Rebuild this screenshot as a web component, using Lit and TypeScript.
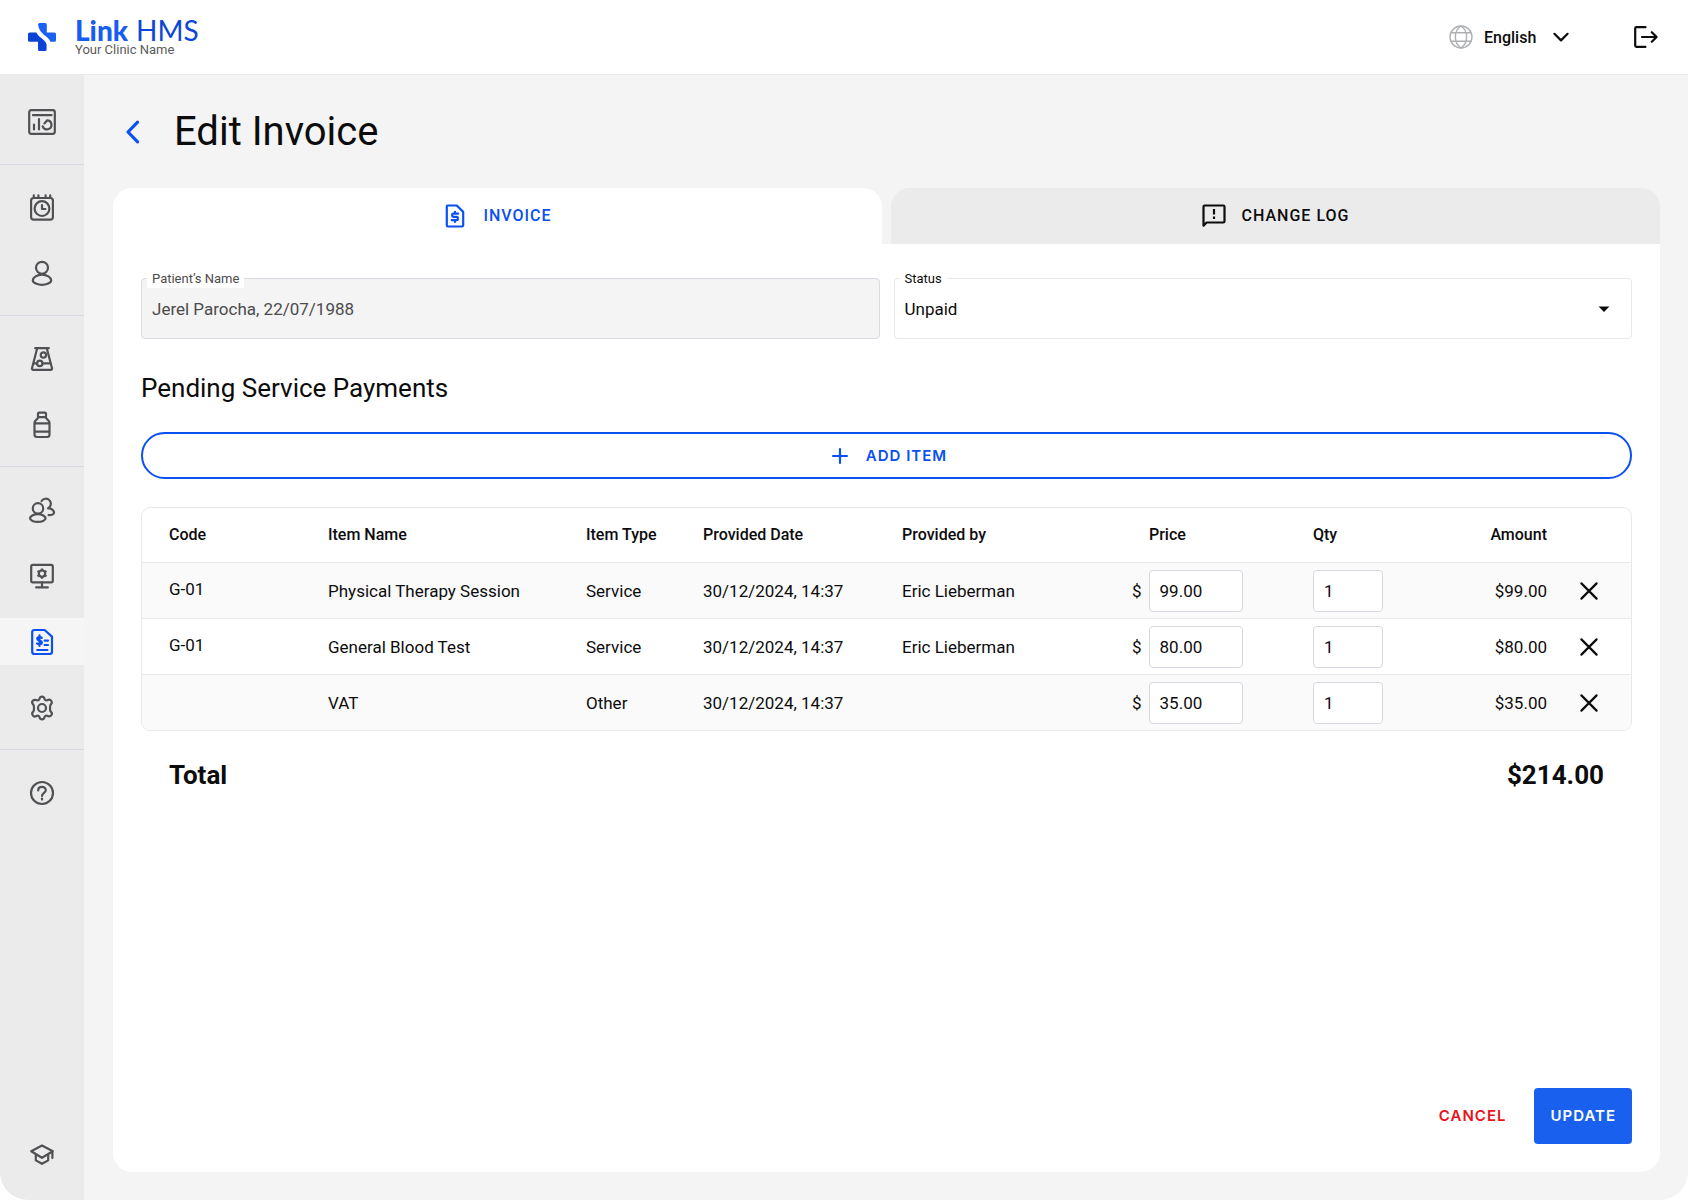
import { LitElement, html, css, svg, nothing } from "lit";
import { customElement, property, state } from "lit/decorators.js";
import { classMap } from "lit/directives/class-map.js";

const icons: Record<string, unknown> = {
  dashboard: svg`
    <rect x="1.2" y="2.2" width="25.6" height="23.6" rx="2"/>
    <path d="M5 7.2H23.5M6 16.5V21.5M11 11V21.5M19 12.4A4.5 4.5 0 1 1 14.7 18.4M16.4 15.4L19 12.6"/>`,
  appointments: svg`
    <rect x="3.1" y="4" width="21.8" height="21.6" rx="2.6"/>
    <path d="M5.8 1.4V4M10.4 1.4V4M17.6 1.4V4M22.2 1.4V4M14 11.2V15H17.4"/>
    <circle cx="14" cy="14.6" r="7.4"/>`,
  patient: svg`
    <circle cx="14" cy="7.8" r="6"/>
    <path d="M14 14.6c-4.8 0-9.2 3-9.2 5.8 0 2.2 5 4.4 9.2 4.4s9.2-2.2 9.2-4.4c0-2.8-4.4-5.8-9.2-5.8z"/>`,
  lab: svg`
    <path d="M7.2 3.2H20.8M9.2 3.2L4 23.2Q3.7 24.8 5.2 24.8H22.8Q24.3 24.8 24 23.2L18.8 3.2M6 18.4H9M14.6 18.4H22.6"/>
    <circle cx="15.4" cy="10" r="2.7"/><circle cx="11.8" cy="18.4" r="2.7"/>`,
  pharmacy: svg`
    <rect x="10" y="1.6" width="8" height="4.6" rx="1"/>
    <path d="M10.2 6.2C10 8.6 6.5 8.8 6.5 12V23.6Q6.5 26 8.9 26H19.1Q21.5 26 21.5 23.6V12C21.5 8.8 18 8.6 17.8 6.2M6.5 12.4H21.5M6.5 20.6H21.5"/>`,
  staff: svg`
    <circle cx="10" cy="12.4" r="5.2"/>
    <path d="M9.8 18.2c-4.2 0-7.8 2-7.8 4.1s4 3.6 7.8 3.6 7.8-1.5 7.8-3.6-3.6-4.1-7.8-4.1z"/>
    <path d="M13.6 5A5 5 0 1 1 20 12.2C23.6 12.8 26 14.6 26 16.6 26 18.2 23.8 19.2 20.6 19.2"/>`,
  workstation: svg`
    <rect x="3.2" y="2.8" width="21.6" height="17.6" rx="1.6"/>
    <path d="M14 20.4V25M8.2 25.4H19.8"/>
    <circle cx="14" cy="11.6" r="3.2"/>
    <path stroke-linecap="butt" d="M14 8.6V6.4M14 14.6V16.8M11.4 10.1L9.5 9M16.6 13.1L18.5 14.2M16.6 10.1L18.5 9M11.4 13.1L9.5 14.2"/>`,
  invoices: svg`
    <path d="M6.4 2H16.6L24 8.6V23.8Q24 26 21.8 26H6.4Q4.2 26 4.2 23.8V4.2Q4.2 2 6.4 2Z"/>
    <path d="M9.2 22H19.4M16.6 12.6H20M16.6 17H20M13.8 9.8C13 8.6 9.2 8.6 9.2 10.8C9.2 13.2 13.8 12 13.8 14.6C13.8 16.8 10 16.8 9 15.4M11.5 7.4V18"/>`,
  settings: svg`
    <path d="M11.5 4.8Q12 2.6 14 2.6T16.5 4.8Q17 6.8 19 6.2Q22 4.6 23.2 6.8T23.4 9.6Q21.6 11.4 22 14Q21.6 16.6 23.4 18.4Q24.6 19.6 23.2 21.4T19 21.8Q17 21.2 16.5 23.2Q16 25.4 14 25.4T11.5 23.2Q11 21.2 9 21.8Q6 23.4 4.8 21.4T4.6 18.4Q6.4 16.6 6 14Q6.4 11.4 4.6 9.6Q3.4 8.4 4.8 6.8T9 6.2Q11 6.8 11.5 4.8Z"/>
    <circle cx="14" cy="14" r="4"/>`,
  help: svg`
    <circle cx="14" cy="14" r="11"/>
    <path d="M10.2 11.4C10.2 6.8 17.8 6.8 17.8 11.2C17.8 14 14 13.8 14 17"/>
    <path d="M14 19.6V20.6"/>`,
  learn: svg`
    <path d="M14 4.6L24.8 10.2L14 16.8L3.2 10.2ZM7.8 13.4V19.4L14 22.8L20.2 19.4V13.4M24.4 10.8V17"/>`,
  globe: svg`
    <circle cx="14" cy="14" r="11"/>
    <path d="M4 9.8H24M4 18.2H24M14 3C6.500 8 6.500 20 14 25M14 3C21.500 8 21.500 20 14 25"/>`,
  chevron: svg`<path d="M7.4 10.8L14 17.4L20.6 10.8"/>`,
  caret: svg`<path d="M8.6 11.4H19.4L14 17Z" fill="currentColor" stroke="none"/>`,
  logout: svg`<path d="M14.5 4.2H5.4Q4.2 4.2 4.2 5.4V22.6Q4.2 23.8 5.4 23.8H14.5M11 14H25.5M20.8 9.2L25.6 14L20.8 18.8"/>`,
  back: svg`<path d="M18.6 4.2L9 14L18.6 23.8"/>`,
  bill: svg`
    <path d="M6.4 3.5H15.8L22.2 9.9V23.3Q22.2 24.5 21 24.5H7Q5.8 24.5 5.8 23.3V4.7Q5.8 3.5 6.4 3.5Z"/>
    <path d="M17.2 11.6H12.2Q11.2 11.6 11.2 12.6V13.8Q11.2 14.8 12.2 14.8H15.8Q16.8 14.8 16.8 15.8V17.2Q16.8 18.2 15.8 18.2H10.8M14 9.8V11.6M14 18.2V20"/>`,
  log: svg`
    <path d="M3.5 23.6V4.7Q3.5 3.5 4.7 3.5H23.3Q24.5 3.5 24.5 4.7V19.3Q24.5 20.5 23.3 20.5H6.6Z"/>
    <path d="M14 7V12.4M14 14.6V17" stroke-linecap="butt"/>`,
  plus: svg`<path d="M14 7V21M7 14H21"/>`,
  close: svg`<path d="M6.4 6.4L21.6 21.6M21.6 6.4L6.4 21.6"/>`,
};

@customElement("hms-icon")
class HmsIcon extends LitElement {
  @property() name = "";

  static styles = css`
    :host { display: inline-flex; flex: none; width: 28px; height: 28px; }
    .glyph {
      width: 28px;
      height: 28px;
      fill: none;
      stroke: currentColor;
      stroke-width: 2.2;
      stroke-linecap: round;
      stroke-linejoin: round;
    }
    .fine { stroke-width: 1.4; }
    .bold { stroke-width: 3.2; }
  `;

  render() {
    const cls = classMap({ glyph: true, fine: this.name === "globe", bold: this.name === "back" });
    return html`<svg class=${cls} viewBox="0 0 28 28" aria-hidden="true">${icons[this.name]}</svg>`;
  }
}

@customElement("hms-header")
class HmsHeader extends LitElement {
  static styles = css`
    :host {
      display: flex;
      align-items: center;
      justify-content: space-between;
      box-sizing: border-box;
      height: 75px;
      padding: 0 29px 0 28px;
      background: #fff;
      border-bottom: 1px solid #e9e9e9;
    }
    .brand { display: flex; align-items: center; gap: 19px; color: inherit; text-decoration: none; }
    .mark { width: 28px; height: 28px; }
    .names { display: flex; flex-direction: column; padding-bottom: 2px; }
    .product {
      display: flex;
      gap: 8px;
      font: 400 28px/26px Lato, sans-serif;
      color: #0b46d8;
    }
    .product b { font-weight: 900; color: #175df2; }
    .clinic { font-size: 13px; line-height: 13px; color: #5c5c5c; }
    .tools { display: flex; align-items: center; gap: 56px; }
    .language { display: flex; align-items: center; gap: 9px; }
    .globe { color: #aeb0b4; }
    .pick { display: grid; grid-template-columns: 1fr 28px; align-items: center; }
    .choice {
      grid-area: 1 / 1 / 2 / 3;
      appearance: none;
      border: 0;
      margin: 0;
      padding: 2px 38px 0 0;
      background: transparent;
      color: #0c0c0d;
      font: 500 16px/28px Roboto, sans-serif;
    }
    .arrow { grid-area: 1 / 2 / 2 / 3; pointer-events: none; }
    .exit { display: flex; padding: 0; border: 0; background: none; color: #0c0c0d; }
  `;

  render() {
    return html`
      <a class="brand" href="#">
        <svg class="mark" viewBox="0 0 28 28" aria-hidden="true">
          <path fill="#1a62f5" d="M10 1.6Q10 0 11.6 0H17.2Q18.8 0 18.8 1.6V9.5H26.4Q28 9.5 28 11.1V17.2Q28 18.8 26.4 18.8H22.4C20 12.5 11.5 12 10 1.6Z"/>
          <path fill="#0b43d6" d="M1.6 9.5H8.4C11 15.5 17 15.5 18.6 21.5V26.4Q18.6 28 17 28H11.6Q10 28 10 26.4V18.8H1.6Q0 18.8 0 17.2V11.1Q0 9.5 1.6 9.5Z"/>
        </svg>
        <span class="names">
          <span class="product"><b>Link</b><span>HMS</span></span>
          <span class="clinic">Your Clinic Name</span>
        </span>
      </a>
      <div class="tools">
        <div class="language">
          <hms-icon class="globe" name="globe"></hms-icon>
          <span class="pick">
            <select class="choice" aria-label="Language"><option>English</option></select>
            <hms-icon class="arrow" name="chevron"></hms-icon>
          </span>
        </div>
        <button class="exit" aria-label="Log out"><hms-icon name="logout"></hms-icon></button>
      </div>
    `;
  }
}

@customElement("hms-sidebar")
class HmsSidebar extends LitElement {
  static styles = css`
    :host { display: block; background: #ebebeb; }
    .nav { display: flex; flex-direction: column; height: 100%; }
    .group {
      display: flex;
      flex-direction: column;
      gap: 19px;
      padding: 19px 0 18px;
      border-bottom: 1px solid #d5d9e4;
    }
    .group:first-child { padding: 23px 0 19px; }
    .group.open { border-bottom: 0; }
    .group.foot { border-bottom: 0; margin-top: auto; padding-bottom: 22px; }
    .item { display: flex; align-items: center; justify-content: center; height: 47px; color: #505154; }
    .item.active { background: #f5f5f5; color: #0b50f0; }
  `;

  private groups = [
    { cls: "", items: [["dashboard", "Dashboard"]] },
    { cls: "", items: [["appointments", "Appointments"], ["patient", "Patients"]] },
    { cls: "", items: [["lab", "Laboratory"], ["pharmacy", "Pharmacy"]] },
    { cls: "", items: [["staff", "Staff"], ["workstation", "Workstations"], ["invoices", "Invoices"], ["settings", "Settings"]] },
    { cls: "open", items: [["help", "Help"]] },
    { cls: "foot", items: [["learn", "Learning"]] },
  ];

  render() {
    return html`<nav class="nav" aria-label="Main">
      ${this.groups.map(
        (g) => html`<div class="group ${g.cls}">
          ${g.items.map(
            ([icon, label]) => html`<a
              class=${classMap({ item: true, active: icon === "invoices" })}
              href="#"
              aria-label=${label}
              ><hms-icon name=${icon}></hms-icon
            ></a>`
          )}
        </div>`
      )}
    </nav>`;
  }
}

interface Item {
  code: string;
  name: string;
  type: string;
  date: string;
  by: string;
  price: number;
  qty: number;
}

@customElement("invoice-items")
class InvoiceItems extends LitElement {
  @property({ attribute: false }) items: Item[] = [];

  static styles = css`
    :host { display: block; }
    .frame { border: 1px solid #e9e9ec; border-radius: 9px; overflow: hidden; }
    .items { width: 100%; table-layout: fixed; border-collapse: collapse; font-size: 17px; line-height: 20px; }
    .items th, .items td { height: 55px; padding: 0; text-align: left; vertical-align: middle; font-weight: 400; }
    .items th { height: 54px; font-size: 16px; font-weight: 500; }
    .items tbody tr { border-top: 1px solid #e9e9ec; }
    .items tbody tr:nth-child(odd) { background: #fafafa; }
    .items .code { padding-left: 27px; }
    .items td.code { padding-bottom: 4px; height: 51px; }
    .items .amount { text-align: right; }
    .items .remove { text-align: center; }
    .items th.price { padding-left: 17px; }
    .w-code { width: 186px; }
    .w-name { width: 258px; }
    .w-type { width: 117px; }
    .w-date { width: 199px; }
    .w-by { width: 230px; }
    .w-price { width: 181px; }
    .w-qty { width: 87px; }
    .w-amount { width: 147px; }
    .w-remove { width: 84px; }
    .money { display: flex; align-items: center; gap: 7px; }
    .box {
      display: block;
      box-sizing: border-box;
      height: 42px;
      margin: 0;
      padding: 0 10px;
      border: 1px solid #d6d7e0;
      border-radius: 4px;
      background: #fff;
      color: #0c0c0d;
      font: 400 17px/20px Roboto, sans-serif;
    }
    .box.cost { width: 94px; }
    .box.count { width: 70px; }
    .drop { display: inline-flex; padding: 4px; border: 0; background: none; color: #0c0c0d; vertical-align: middle; }
  `;

  render() {
    return html`<div class="frame">
      <table class="items">
        <colgroup>
          <col class="w-code" /><col class="w-name" /><col class="w-type" /><col class="w-date" /><col class="w-by" />
          <col class="w-price" /><col class="w-qty" /><col class="w-amount" /><col class="w-remove" />
        </colgroup>
        <thead>
          <tr>
            <th class="code">Code</th>
            <th>Item Name</th>
            <th>Item Type</th>
            <th>Provided Date</th>
            <th>Provided by</th>
            <th class="price">Price</th>
            <th>Qty</th>
            <th class="amount">Amount</th>
            <th aria-label="Remove"></th>
          </tr>
        </thead>
        <tbody>
          ${this.items.map(
            (it) => html`<tr>
              <td class="code">${it.code || nothing}</td>
              <td>${it.name}</td>
              <td>${it.type}</td>
              <td>${it.date}</td>
              <td>${it.by || nothing}</td>
              <td>
                <label class="money">$<input class="box cost" aria-label="Price" .value=${it.price.toFixed(2)} /></label>
              </td>
              <td><input class="box count" aria-label="Quantity" .value=${String(it.qty)} /></td>
              <td class="amount">$${(it.price * it.qty).toFixed(2)}</td>
              <td class="remove">
                <button class="drop" aria-label="Remove item"><hms-icon name="close"></hms-icon></button>
              </td>
            </tr>`
          )}
        </tbody>
      </table>
    </div>`;
  }
}

@customElement("app-root")
class AppRoot extends LitElement {
  @state() private items: Item[] = [
    { code: "G-01", name: "Physical Therapy Session", type: "Service", date: "30/12/2024, 14:37", by: "Eric Lieberman", price: 99, qty: 1 },
    { code: "G-01", name: "General Blood Test", type: "Service", date: "30/12/2024, 14:37", by: "Eric Lieberman", price: 80, qty: 1 },
    { code: "", name: "VAT", type: "Other", date: "30/12/2024, 14:37", by: "", price: 35, qty: 1 },
  ];

  static styles = css`
    :host {
      display: block;
      background: #fff;
      color: #0c0c0d;
      font-family: Roboto, "Noto Sans", sans-serif;
    }
    .window {
      display: grid;
      grid-template: auto 1fr / 84px 1fr;
      min-height: 100vh;
      border-radius: 28px;
      overflow: hidden;
      background: #f4f4f4;
    }
    .top { grid-column: 1 / 3; }
    .main { display: flex; flex-direction: column; padding: 29px 28px 28px 29px; min-width: 0; }
    .heading { display: flex; align-items: center; gap: 27px; padding: 0 6px; height: 56px; }
    .back { display: flex; color: #0b50f0; }
    .title { margin: 0; font-size: 40px; line-height: 56px; font-weight: 400; }
    .tabs { display: flex; gap: 9px; margin-top: 28px; }
    .tab {
      flex: 1 1 0;
      display: flex;
      align-items: center;
      justify-content: center;
      gap: 14px;
      height: 56px;
      padding: 0 2px 0 0;
      border: 0;
      border-radius: 19px 19px 0 0;
      background: #ebebeb;
      color: #0c0c0d;
      font: 500 16px/20px Roboto, sans-serif;
      letter-spacing: 1px;
    }
    .tab.current { background: #fff; color: #0b50f0; }
    .card {
      flex: 1;
      display: flex;
      flex-direction: column;
      padding: 34px 28px 28px;
      border-radius: 0 0 19px 19px;
      background: #fff;
    }
    .fields { display: grid; grid-template-columns: 1fr 1fr; gap: 14px; }
    .field { position: relative; display: grid; grid-template-columns: 1fr 28px; align-items: center; }
    .caption {
      position: absolute;
      top: -8px;
      left: 6px;
      padding: 0 5px;
      background: #fff;
      font-size: 13px;
      line-height: 18px;
    }
    .input {
      grid-area: 1 / 1 / 2 / 3;
      appearance: none;
      box-sizing: border-box;
      width: 100%;
      height: 61px;
      margin: 0;
      padding: 0 10px;
      border: 1px solid #e9e9ee;
      border-radius: 4px;
      background: #fff;
      color: #0c0c0d;
      font: 400 17px/20px Roboto, sans-serif;
    }
    .muted .input { background: #f4f4f4; color: #4b4b4d; border-color: #d9dae2; }
    .muted .caption { color: #4b4b4d; }
    .pointer { grid-area: 1 / 2 / 2 / 3; justify-self: end; margin-right: 14px; pointer-events: none; }
    .section { margin: 33px 0 28px; font-size: 26px; line-height: 32px; font-weight: 400; }
    .add {
      display: flex;
      align-items: center;
      justify-content: center;
      gap: 12px;
      height: 47px;
      border: 2px solid #0b50f0;
      border-radius: 24px;
      background: #fff;
      color: #0b50f0;
      font: 600 15px/20px Inter, sans-serif;
      letter-spacing: 1px;
    }
    .table { margin-top: 28px; }
    .total {
      display: flex;
      justify-content: space-between;
      padding: 28px;
      font-size: 26px;
      line-height: 32px;
      font-weight: 700;
    }
    .actions { display: flex; justify-content: flex-end; margin-top: auto; }
    .action {
      height: 56px;
      padding: 0 28px;
      border: 0;
      border-radius: 4px;
      background: none;
      color: #e8131b;
      font: 600 15px/20px Inter, sans-serif;
      letter-spacing: 1px;
    }
    .action.primary { padding: 0 16px; background: #1a60ee; color: #fff; }
  `;

  render() {
    const total = this.items.reduce((sum, it) => sum + it.price * it.qty, 0);
    return html`<div class="window">
      <hms-header class="top"></hms-header>
      <hms-sidebar></hms-sidebar>
      <main class="main">
        <div class="heading">
          <a class="back" href="#" aria-label="Back"><hms-icon name="back"></hms-icon></a>
          <h1 class="title">Edit Invoice</h1>
        </div>
        <div class="tabs" role="tablist">
          <button class="tab current" role="tab" aria-selected="true"><hms-icon name="bill"></hms-icon>INVOICE</button>
          <button class="tab" role="tab" aria-selected="false"><hms-icon name="log"></hms-icon>CHANGE LOG</button>
        </div>
        <section class="card">
          <div class="fields">
            <div class="field muted">
              <input class="input" id="patient" readonly value="Jerel Parocha, 22/07/1988" />
              <label class="caption" for="patient">Patient’s Name</label>
            </div>
            <div class="field">
              <select class="input" id="status"><option>Unpaid</option></select>
              <hms-icon class="pointer" name="caret"></hms-icon>
              <label class="caption" for="status">Status</label>
            </div>
          </div>
          <h2 class="section">Pending Service Payments</h2>
          <button class="add"><hms-icon name="plus"></hms-icon>ADD ITEM</button>
          <invoice-items class="table" .items=${this.items}></invoice-items>
          <div class="total"><span>Total</span><span>$${total.toFixed(2)}</span></div>
          <div class="actions">
            <button class="action">CANCEL</button>
            <button class="action primary">UPDATE</button>
          </div>
        </section>
      </main>
    </div>`;
  }
}
